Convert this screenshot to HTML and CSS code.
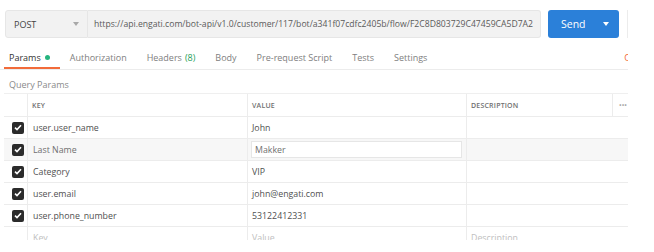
FILE: index.html
```html
<!DOCTYPE html>
<html lang="en">
<head>
    <meta charset="UTF-8">
    <title>Query Params</title>
    <link rel="stylesheet" href="styles.css">
</head>
<body>

    <div class="app">
        <!-- Request bar -->
        <div class="request-bar">
            <div class="method">
                <span>POST</span>
                <svg class="caret" width="6" height="4" viewBox="0 0 6 4"><path d="M0 0h6L3 4z" fill="#a8a8a8"/></svg>
            </div>
            <div class="url">https://api.engati.com/bot-api/v1.0/customer/117/bot/a341f07cdfc2405b/flow/F2C8D803729C47459CA5D7A2</div>
            <button class="send">
                <span>Send</span>
                <svg class="caret" width="6" height="4" viewBox="0 0 6 4"><path d="M0 0h6L3 4z" fill="#ffffff"/></svg>
            </button>
            <div class="save"></div>
        </div>

        <!-- Tabs -->
        <div class="tabs">
            <div class="tab active">Params <span class="dot"></span></div>
            <div class="tab">Authorization</div>
            <div class="tab">Headers <span class="count">(8)</span></div>
            <div class="tab">Body</div>
            <div class="tab">Pre-request Script</div>
            <div class="tab">Tests</div>
            <div class="tab">Settings</div>
            <div class="cookies">Cookies</div>
        </div>

        <div class="section-title">Query Params</div>

        <!-- Params table -->
        <div class="params">
            <div class="row head">
                <div class="cell check"></div>
                <div class="cell">KEY</div>
                <div class="cell">VALUE</div>
                <div class="cell">DESCRIPTION</div>
                <div class="cell more">•••</div>
            </div>
            <div id="param-rows"></div>
        </div>
    </div>

    <script>
        // Query params shown in the table
        const params = [
            { key: "user.user_name", value: "John" },
            { key: "Last Name", value: "Makker", hover: true },
            { key: "Category", value: "VIP" },
            { key: "user.email", value: "john@engati.com" },
            { key: "user.phone_number", value: "53122412331" }
        ];

        const checkIcon = '<svg width="8" height="7" viewBox="0 0 8 7"><path d="M1 3.6l2 2 4-4.4" fill="none" stroke="#fff" stroke-width="1.6"/></svg>';

        let rowsBox = document.getElementById("param-rows");

        params.forEach(param => {
            let row = document.createElement("div");
            row.className = param.hover ? "row hover" : "row";

            let valueCell = param.hover
                ? `<div class="cell"><div class="edit">${param.value}</div></div>`
                : `<div class="cell">${param.value}</div>`;

            row.innerHTML = `
                <div class="cell check"><span class="box">${checkIcon}</span></div>
                <div class="cell key">${param.key}</div>
                ${valueCell}
                <div class="cell"></div>
                <div class="cell blank"></div>
            `;
            rowsBox.appendChild(row);
        });

        // Empty row for a new param
        let newRow = document.createElement("div");
        newRow.className = "row placeholder";
        newRow.innerHTML = `
            <div class="cell check"></div>
            <div class="cell key">Key</div>
            <div class="cell">Value</div>
            <div class="cell">Description</div>
            <div class="cell blank"></div>
        `;
        rowsBox.appendChild(newRow);
    </script>

</body>
</html>
```

FILE: styles.css
```css
/* General styling */
body {
    margin: 0;
    padding: 0;
    background: #ffffff;
    font-family: 'Open Sans', 'DejaVu Sans', sans-serif;
    color: #505050;
}

.app {
    width: 628px;
    height: 240px;
    overflow: hidden;
}

/* Request bar */
.request-bar {
    display: flex;
    height: 28px;
    padding: 10px 0 0 5px;
}

.request-bar > * {
    flex: none;
}

.method,
.url {
    box-sizing: border-box;
    height: 28px;
    background: #f2f2f2;
    border: 1px solid #e6e6e6;
    display: flex;
    align-items: center;
    font-size: 9px;
}

.method {
    width: 83px;
    padding: 0 8px 0 8px;
    justify-content: space-between;
    border-radius: 3px 0 0 3px;
    color: #444;
}

.url {
    width: 453px;
    padding: 0 6px;
    border-left: none;
    border-radius: 0 3px 3px 0;
    white-space: nowrap;
    overflow: hidden;
    font-size: 8.65px;
    color: #5a5a5a;
}

.send {
    box-sizing: border-box;
    width: 71px;
    height: 28px;
    margin-left: 7px;
    padding: 0 10px 0 13px;
    display: flex;
    align-items: center;
    justify-content: space-between;
    background-color: #2b80d9;
    color: #fff;
    border: none;
    border-radius: 3px;
    font-family: 'Open Sans', sans-serif;
    font-size: 10.5px;
}

.save {
    width: 40px;
    height: 28px;
    margin-left: 8px;
    box-sizing: border-box;
    border-left: 1px solid #ececec;
}

/* Tabs */
.tabs {
    display: flex;
    padding: 10px 0 0 4px;
    border-bottom: 1px solid #ececec;
}

.tab {
    height: 19px;
    padding: 0 5px;
    margin-right: 10px;
    display: flex;
    align-items: center;
    border-bottom: 2px solid transparent;
    font-size: 9px;
    color: #808080;
    white-space: nowrap;
}

.tab.active {
    padding-right: 10px;
    margin-right: 5px;
    color: #333;
    border-bottom-color: #f26b3a;
}

.dot {
    width: 5px;
    height: 5px;
    margin-left: 4px;
    border-radius: 50%;
    background: #26b47f;
}

.count {
    margin-left: 3px;
    color: #26a05a;
}

.cookies {
    margin-left: auto;
    margin-right: -29px;
    height: 19px;
    display: flex;
    align-items: center;
    font-size: 9px;
    color: #f26b3a;
}

.section-title {
    padding: 8px 0 0 9px;
    line-height: 13px;
    font-size: 9px;
    color: #8a8a8a;
}

/* Params table */
.params {
    margin: 2px 0 0 4px;
    border-top: 1px solid #efefef;
}

.row {
    display: grid;
    grid-template-columns: 23px 220px 219px 146px 1fr;
    height: 21px;
    border-bottom: 1px solid #ececec;
    font-size: 8.8px;
}

.row.head {
    height: 22px;
    font-size: 7px;
    font-weight: 600;
    letter-spacing: 0.2px;
    color: #707070;
}

.cell {
    display: flex;
    align-items: center;
    padding: 0 4px;
    border-left: 1px solid #ececec;
    white-space: nowrap;
    overflow: hidden;
}

.cell.check {
    border-left: none;
    padding: 0 0 0 8px;
}

.cell.key {
    padding-left: 5px;
}

.cell.blank {
    border-left: none;
}

.row.head .more {
    padding-left: 6px;
    color: #aaa;
    letter-spacing: 0;
}

.box {
    width: 12px;
    height: 12px;
    border-radius: 2px;
    background: #2b2b2b;
    display: flex;
    align-items: center;
    justify-content: center;
}

.row.hover {
    background: #f7f7f7;
    color: #707070;
}

.edit {
    box-sizing: border-box;
    width: 212px;
    height: 17px;
    margin-left: -1px;
    padding-left: 3px;
    display: flex;
    align-items: center;
    background: #fff;
    border: 1px solid #e6e6e6;
}

.row.placeholder {
    color: #c0c0c0;
}
```
